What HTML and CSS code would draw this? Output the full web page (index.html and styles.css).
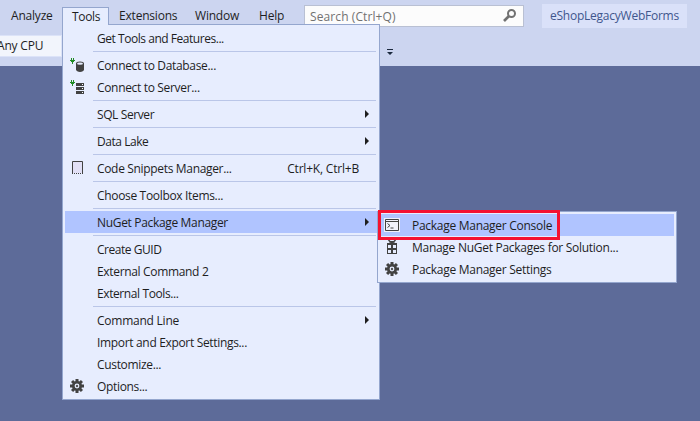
FILE: index.html
```
<!DOCTYPE html>
<html lang="en">
<head>
<meta charset="utf-8">
<title>Tools menu</title>
<link rel="stylesheet" href="styles.css">
</head>
<body>
<svg class="defs" width="0" height="0">
  <symbol id="gear" viewBox="0 0 14 14">
    <g fill="#424242"><path d="M5.500 0h3v14h-3zM0 5.500h14v3H0z"/><path d="M5.500 0h3v14h-3zM0 5.500h14v3H0z" transform="rotate(45 7 7)"/></g>
    <circle cx="7" cy="7" r="3.700" fill="none" stroke="#424242" stroke-width="2.600"/>
    <circle cx="7" cy="7" r="2.400" fill="#e7edfe"/><circle cx="7" cy="7" r="1.200" fill="#555"/>
  </symbol>
  <symbol id="plug" viewBox="0 0 5 6">
    <path d="M1 0h1v2H1zM3 0h1v2H3zM0 2h5v1H0zM1 3h3v1H1zM2 4h1v2H2z" fill="#1f8a24"/>
  </symbol>
</svg>
<header class="top">
  <nav class="bar">
    <span class="tab analyze">Analyze</span>
    <span class="tab tools">Tools</span>
    <span class="tab ext">Extensions</span>
    <span class="tab window">Window</span>
    <span class="tab help">Help</span>
    <div class="search"><span>Search (Ctrl+Q)</span>
      <svg width="13" height="13" viewBox="0 0 13 13" fill="none" stroke="#717171"><circle cx="8.500" cy="4.500" r="3.500" stroke-width="2"/><path d="M6 7L1 12" stroke-width="2.600"/></svg>
    </div>
    <div class="solution">eShopLegacyWebForms</div>
  </nav>
  <div class="toolbar"><div class="combo"><span>Any CPU</span></div>
    <svg class="overflow" width="6" height="6" viewBox="0 0 6 6" fill="#1b293e"><path d="M0 0h6v1H0zM0 3h6L3 6z"/></svg>
  </div>
</header>

<div class="menu main">
  <div class="item tightest"><span>Get Tools and Features...</span></div>
  <hr>
  <div class="item"><svg class="icon" width="16" height="16"><use href="#plug" y="1" width="5" height="6"/><path d="M6 6.500v6c0 3.200 8 3.200 8 0v-6z" fill="#424242"/><ellipse cx="10" cy="6.500" rx="4" ry="2" fill="#424242"/><ellipse cx="10" cy="6.700" rx="3" ry="1.100" fill="#e7edfe"/></svg><span>Connect to Database...</span></div>
  <div class="item"><svg class="icon" width="16" height="16"><use href="#plug" y="1" width="5" height="6"/><path d="M6 4h8v3H6zM6 8h8v3H6zM6 12h8v3H6z" fill="#424242"/><path d="M12 5h1v1h-1zM12 9h1v1h-1zM12 13h1v1h-1z" fill="#fff"/></svg><span>Connect to Server...</span></div>
  <hr>
  <div class="item tighter"><span>SQL Server</span><i class="arrow"></i></div>
  <hr>
  <div class="item tightest"><span>Data Lake</span><i class="arrow"></i></div>
  <hr>
  <div class="item"><svg class="icon" width="16" height="16"><path d="M3 2h9v11H3z" fill="#e2e0f6"/><path d="M2.500 13V1.500h10V13" fill="none" stroke="#424242"/><path d="M2 13.500h11" stroke="#424242" stroke-dasharray="1 1"/></svg><span>Code Snippets Manager...</span><kbd>Ctrl+K, Ctrl+B</kbd></div>
  <hr>
  <div class="item"><span>Choose Toolbox Items...</span></div>
  <hr>
  <div class="item active"><span>NuGet Package Manager</span><i class="arrow"></i></div>
  <hr>
  <div class="item tightest"><span>Create GUID</span></div>
  <div class="item"><span>External Command 2</span></div>
  <div class="item tighter"><span>External Tools...</span></div>
  <hr>
  <div class="item loose"><span>Command Line</span><i class="arrow"></i></div>
  <div class="item"><span>Import and Export Settings...</span></div>
  <div class="item"><span>Customize...</span></div>
  <div class="item"><svg class="icon" width="16" height="16"><use href="#gear" y="1" width="14" height="14"/></svg><span>Options...</span></div>
</div>

<div class="menu sub">
  <div class="item active"><svg class="icon" width="16" height="16"><path d="M0 1h16v14H0z" fill="#f1f1fb"/><path d="M1.500 2.500h13v11h-13zM1 4.500h14" fill="none" stroke="#424242"/><path d="M3.500 6.500L6 8.500L3.500 10.500M6.500 11h3" fill="none" stroke="#424242"/></svg><span>Package Manager Console</span></div>
  <div class="item"><svg class="icon" width="16" height="16"><path d="M3 4h10v11H3z" fill="#424242"/><path d="M4 6h3v3H4zM9 6h3v3H9zM4 11h3v3H4zM9 11h3v3H9z" fill="#e7edfe"/><path d="M4.500 1l3.500 3.500L11.500 1M5 2.800h6" fill="none" stroke="#424242" stroke-width="1.500"/></svg><span>Manage NuGet Packages for Solution...</span></div>
  <div class="item"><svg class="icon" width="16" height="16"><use href="#gear" x="1" y="1" width="14" height="14"/></svg><span>Package Manager Settings</span></div>
</div>
<div class="callout"></div>
</body>
</html>
```
FILE: styles.css
```
* { box-sizing: border-box; }
body { margin: 0; width: 700px; height: 421px; overflow: hidden; position: relative; background: #5d6b99; color: #1e1e1e; font: 12px/22px "Open Sans", "Noto Sans", sans-serif; letter-spacing: -0.2px; white-space: nowrap; }
.defs { position: absolute; }
.top { height: 66px; background: #ccd5f0; }
.bar { display: flex; height: 30px; }
.tab { padding-top: 5px; }
.analyze { width: 51px; margin-left: 11px; }
.tools { position: relative; z-index: 2; width: 47px; height: 18px; margin-top: 7px; padding: 0 0 0 9px; line-height: 18px; letter-spacing: -0.35px; background: #e7edfe; border: 1px solid #94a6ce; border-bottom: 0; }
.ext { width: 76px; margin-left: 10px; }
.window { width: 64px; }
.help { width: 45px; }
.search { display: flex; width: 220px; height: 22px; margin-top: 5px; padding: 0 7px 0 5px; justify-content: space-between; border: 1px solid #b9c0d3; background: #fcfcfc; color: #717171; line-height: 21px; letter-spacing: 0.1px; }
.search svg { margin-top: 3px; }
.solution { width: 145px; height: 24px; margin: 4px 0 0 18px; padding-left: 8px; background: #dae1f9; color: #40568d; line-height: 24px; letter-spacing: -0.24px; }
.toolbar { display: flex; height: 36px; padding-top: 5px; }
.combo { width: 62px; height: 22px; background: #f2f5fc; border: 1px solid #dce3f8; border-left: 0; line-height: 20px; }
.combo span { margin-left: -3px; }
.overflow { margin: 14px 0 0 325px; }
.menu { position: absolute; padding: 2px; border: 1px solid #94a6ce; background: #e7edfe; letter-spacing: -0.33px; }
.main { left: 62px; top: 24px; width: 318px; height: 376px; }
.sub { left: 377px; top: 211px; width: 300px; height: 72px; letter-spacing: -0.28px; }
.item { display: flex; align-items: center; position: relative; height: 22px; padding-left: 32px; }
.item span, kbd { padding-top: 2px; }
.item.active { background: #b0c4ff; }
.tighter { letter-spacing: -0.4px; }
.tightest { letter-spacing: -0.46px; }
.loose { letter-spacing: -0.24px; }
.icon { position: absolute; left: 5px; top: 3px; }
.sub .icon { left: 4px; }
hr { height: 1px; margin: 2px 1px 2px 28px; border: 0; background: #bac6e8; }
.arrow { margin: 0 8px 0 auto; border: solid transparent; border-width: 4px 0 4px 4px; border-left-color: #1e1e1e; }
kbd { font: inherit; letter-spacing: -0.2px; margin: 0 18px 0 auto; }
.callout { position: absolute; left: 378px; top: 210px; width: 182px; height: 30px; border: 3px solid #f51231; }
```
